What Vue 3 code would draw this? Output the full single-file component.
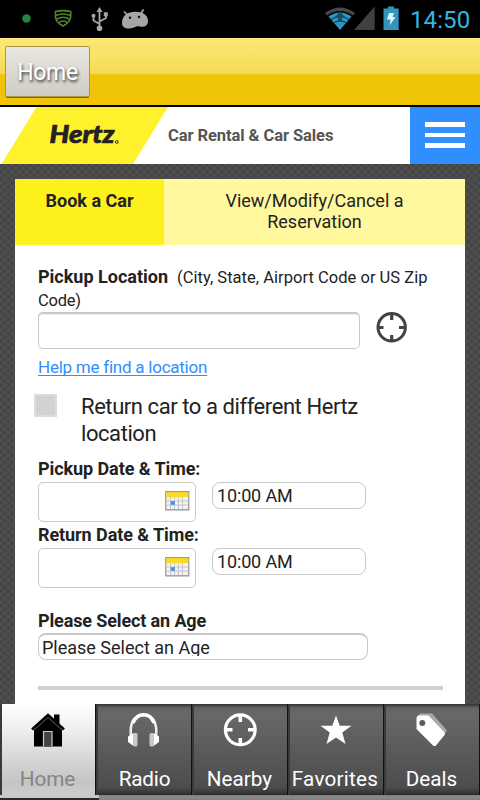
<script setup>
const dates = [
  { label: 'Pickup Date & Time:', time: '10:00 AM' },
  { label: 'Return Date & Time:', time: '10:00 AM' },
]
const days = [5.5, 9.5, 13.5, 17.5]
</script>

<template>
  <div class="screen">
    <div class="status">
      <svg class="status-left" width="160" height="38" viewBox="0 0 160 38">
        <circle cx="26.5" cy="18.5" r="4.3" fill="#238540" />
        <g fill="none" stroke="#4d8a2b" stroke-width="1.6">
          <path d="M55.500 12.500V11.600Q63 9.600 70.700 11.600V17Q70 22.500 63 26Q56 22.500 55.500 17Z" />
          <path d="M56 15.500Q63 12.500 70 15.500M57 19Q63 15.500 69.500 19M59 22.500Q63 19.500 67 22.500" />
        </g>
        <g fill="none" stroke="#a6a6a6" stroke-width="1.8">
          <path d="M99.500 10V27M99.500 24L93.500 20.500V16M99.500 21.500L106 18V15" />
        </g>
        <path d="M96.500 12L99.500 7L102.500 12Z" fill="#a6a6a6" />
        <circle cx="99.500" cy="28.300" r="2.800" fill="#a6a6a6" />
        <circle cx="93.500" cy="15.800" r="2" fill="#a6a6a6" />
        <rect x="103.800" y="12.300" width="4" height="4" fill="#a6a6a6" />
        <path d="M124 11.500L127.500 15M143.500 9.500L140.500 14" stroke="#a6a6a6" stroke-width="1.700" />
        <path d="M122 23C122 15 128 11.700 135 11.700C143 11.700 148 15 148 21C148 26 144 27.500 140 26.500C137 26 136.500 26.500 134 27.500C129 29.500 122 29 122 23Z" fill="#a6a6a6" />
        <circle cx="130" cy="17.700" r="1.200" fill="#111" />
        <circle cx="139" cy="17" r="1.200" fill="#111" />
      </svg>
      <svg class="status-right" width="80" height="38" viewBox="320 0 80 38">
        <path d="M325 13Q340 2 355 13L353 15.500Q340 6.500 327 15.500Z" fill="#484848" />
        <path d="M328.500 16.500Q340 8.500 351.500 16.500L340 30Z" fill="#2b96c0" />
        <path d="M331 19.500Q340 13.500 349 19.500M334 23Q340 18.500 346 23" fill="none" stroke="#154b60" stroke-width="1.300" />
        <path d="M340 11L344.500 17H342V22H338V17H335.500Z" fill="#174e64" />
        <path d="M374.700 6.500V30H354Z" fill="#404040" />
        <path d="M383.500 8.500H388V6.500H394V8.500H398.700V30H383.500Z" fill="#3395bc" />
        <path d="M389 13H394L392.500 17H395.500L389.500 25.500L390.700 19.500H387Z" fill="#dff5ff" />
      </svg>
      <span class="clock">14:50</span>
    </div>

    <div class="titlebar"><button class="home-btn">Home</button></div>

    <header class="brand">
      <svg class="logo" width="168" height="57" viewBox="0 0 168 57">
        <path d="M36.500 0H168L133 57H1.500Z" fill="#fff12b" />
        <text class="wordmark" x="49.500" y="36.300" textLength="65" lengthAdjust="spacingAndGlyphs">Hertz</text>
        <circle cx="116.800" cy="35" r="1.400" fill="none" stroke="#333" stroke-width="1" />
      </svg>
      <span class="tagline">Car Rental &amp; Car Sales</span>
      <div class="menu"><i></i><i></i><i></i></div>
    </header>

    <main class="body">
      <section class="card">
        <nav class="tabs">
          <div class="tab active">Book a Car</div>
          <div class="tab other">View/Modify/Cancel a<br />Reservation</div>
        </nav>
        <div class="form">
          <div class="label"><b>Pickup Location</b><span class="hint">(City, State, Airport Code or US Zip</span><br /><span class="hint2">Code)</span></div>
          <div class="location-row">
            <div class="field location"></div>
            <svg width="31" height="31" viewBox="0 0 31 31" fill="none" stroke="#444">
              <circle cx="15.700" cy="15.300" r="13.700" stroke-width="3" />
              <path d="M15.700 1V8M15.700 23V30M1 15.500H7.500M23 15.500H30" stroke-width="3.200" />
            </svg>
          </div>
          <a class="help">Help me find a location</a>
          <div class="check-row">
            <div class="checkbox"></div>
            <div>Return car to a different Hertz<br />location</div>
          </div>
          <div v-for="d in dates" :key="d.label" class="date-block">
            <b class="date-label">{{ d.label }}</b>
            <div class="date-row">
              <div class="field date">
                <svg width="25" height="21" viewBox="0 0 25 21">
                  <rect x="1" y="18" width="24" height="2" fill="#e6e6e6" />
                  <rect x=".7" y=".7" width="23" height="18" fill="#f3f3f3" stroke="#a3a3a8" stroke-width="1.400" />
                  <rect x="1.300" y="1" width="22" height="5.300" fill="#fad928" />
                  <path d="M1 .6H24" stroke="#b99d3a" stroke-width="1" />
                  <path v-for="x in days" :key="x" :d="`M${x} 6.500V18`" stroke="#c4c4c8" />
                  <path d="M1.500 10H23M1.500 14H23" stroke="#c4c4c8" />
                  <rect x="5.800" y="10.200" width="4" height="3.600" fill="#3e92e3" />
                </svg>
              </div>
              <div class="select time"><span>{{ d.time }}</span></div>
            </div>
          </div>
          <b class="age-label">Please Select an Age</b>
          <div class="select age"><span>Please Select an Age</span></div>
          <div class="rule"></div>
        </div>
      </section>
    </main>

    <footer class="tabbar">
      <div class="item on">
        <svg width="34" height="34" viewBox="0 0 34 34">
          <path d="M3 15L17 3L31 15V33.500H3Z" fill="#000" />
          <path d="M23 1.500H28.500V12L23 7Z" fill="#000" />
          <path d="M1 16.500L17 2L33 16.500" fill="none" stroke="#000" stroke-width="2.600" />
          <path d="M3 17L17 4.500L31 17" fill="none" stroke="#777" stroke-width=".8" />
          <path d="M12.500 33.500V18.500H21V33.500" fill="#444" stroke="#ccc" stroke-width="1.200" />
        </svg>
        <span>Home</span>
      </div>
      <div class="item radio">
        <svg width="34" height="34" viewBox="0 0 34 34">
          <path d="M4 23C2.500 11 6.500 2 16.500 2S30.500 11 29 23" fill="none" stroke="#eee" stroke-width="2.600" />
          <path d="M6 10C9 3 13 1.800 16.500 1.800S24.500 3 27 10" fill="none" stroke="#fff" stroke-width="3.400" />
          <path d="M6.500 20L1 23.500V29L6.500 33ZM26.500 20L32 23.500V29L26.500 33Z" fill="#fff" />
          <rect x="6" y="20" width="4.500" height="13.500" rx="1.500" fill="#c9c9c9" />
          <rect x="22.500" y="20" width="4.500" height="13.500" rx="1.500" fill="#c9c9c9" />
        </svg>
        <span>Radio</span>
      </div>
      <div class="item">
        <svg width="34" height="34" viewBox="0 0 34 34" fill="none" stroke="#fff">
          <circle cx="17.300" cy="16.800" r="14.900" stroke-width="3.200" />
          <path d="M17.300 1V9M17.300 25V33M1.500 16.800H9.500M25 16.800H33" stroke-width="3.600" />
        </svg>
        <span>Nearby</span>
      </div>
      <div class="item favorites">
        <svg width="34" height="34" viewBox="0 0 34 34">
          <path d="M17 2.500L20.700 12.700H32.500L23.300 19.600L26.500 31L17 24.500L7.500 31L10.700 19.600L1.500 12.700H13.300Z" fill="#fff" />
        </svg>
        <span>Favorites</span>
      </div>
      <div class="item">
        <svg width="34" height="34" viewBox="0 0 34 34">
          <path d="M3 3L5 .6H17L32 17.500L28.500 22L14 4Z" fill="#aaa" />
          <path d="M3 2.500H13.500L29.500 19.500Q30.500 21 29.500 22L21 32.500Q19.500 33.700 18 32.500L1.500 16V4.500Z" fill="#fff" />
          <circle cx="7.300" cy="10" r="3" fill="#5d5d5d" />
        </svg>
        <span>Deals</span>
      </div>
    </footer>
    <div class="bottom"><i></i></div>
  </div>
</template>

<style>
body { margin: 0; }
</style>

<style scoped>
* { box-sizing: border-box; }
.screen { width: 480px; height: 800px; overflow: hidden; display: flex; flex-direction: column; background: #000; font-family: Roboto, sans-serif; color: #222; font-size: 18px; white-space: nowrap; }
.status { height: 38px; display: flex; align-items: center; flex: none; }
.status-right { margin-left: 160px; }
.clock { margin-left: 10px; font-size: 24px; line-height: 38px; color: #33b5e5; padding-top: 1px; letter-spacing: .1px; }
.titlebar { height: 67px; flex: none; padding: 9px 6px; background: linear-gradient(#fce878 0, #f6dc53 35px, #efc407 37px, #efc407 100%); }
.home-btn { display: block; width: 83px; height: 49px; padding: 2px 0 0; border: 0; border-radius: 1px; background: linear-gradient(#e8e7e0, #cfccc4); box-shadow: 0 0 0 1px #a89847, 0 2px 0 #7e6913; color: #fff; font: 23px Roboto, sans-serif; letter-spacing: -.3px; text-shadow: 1px 2px 3px #333; }
.brand { height: 57px; margin-top: 2px; flex: none; background: #fff; display: flex; }
.wordmark { font: italic 900 24px Lato, sans-serif; fill: #222; stroke: #222; stroke-width: .7px; }
.tagline { color: #555; font-weight: 700; font-size: 16.500px; letter-spacing: -.07px; line-height: 57px; width: 242px; }
.menu { width: 70px; background: #308eff; display: flex; flex-direction: column; gap: 6px; padding: 15px 15px 0; }
.menu i { height: 4.500px; background: #fff; flex: none; }
.body { height: 540px; flex: none; padding: 15px 15px 0; background-color: #424242; background-image: repeating-linear-gradient(45deg, #60606055 0, transparent 2px, transparent 3.200px, #60606055 5.200px), repeating-linear-gradient(-45deg, #60606055 0, transparent 2px, transparent 3.200px, #60606055 5.200px); }
.card { height: 525px; background: #fff; }
.tabs { display: flex; height: 66px; }
.tab { text-align: center; line-height: 21px; padding-top: 11px; }
.active { width: 149px; background: #fdf01b; font-weight: 700; }
.other { flex: 1; background: #fff89f; }
.form { padding: 20px 22px 0 23px; display: flex; flex-direction: column; }
.label { height: 46px; line-height: 23px; }
.hint, .hint2 { font-size: 16.500px; }
.hint { margin-left: 9px; letter-spacing: .03px; }
.hint2 { position: relative; top: -1px; letter-spacing: -.25px; }
.location-row { display: flex; gap: 16px; margin-top: 1px; height: 37px; }
.field { border: 1.500px solid #c8c8c8; border-radius: 5px; background: #fff; }
.location { width: 322px; height: 37px; border-top-width: 2px; box-shadow: inset 0 1px 1px #eee; }
.help { margin-top: 6px; height: 24px; line-height: 24px; font-size: 17px; letter-spacing: -.24px; color: #308eff; text-decoration: underline; text-underline-offset: 2px; text-decoration-skip-ink: none; align-self: flex-start; }
.check-row { display: flex; margin: 14px 0 10px -4px; height: 54px; line-height: 27px; font-size: 22px; letter-spacing: -.43px; }
.checkbox { width: 23px; height: 23px; margin: 1px 24px 0 0; background: #d2d2d2; border: 2px solid #dcdcdc; }
.date-block { height: 66px; }
.date-label { display: block; height: 25px; line-height: 23px; letter-spacing: -.08px; }
.date-row { display: flex; gap: 16px; align-items: flex-start; }
.date { width: 158px; height: 40px; padding: 8px 0 0 126px; }
.select { border: 1.500px solid #c8c8c8; border-radius: 8px; }
.select span { display: block; }
.time { width: 154px; height: 27px; padding-left: 4px; line-height: 25px; letter-spacing: -.15px; }
.age-label { margin-top: 20px; height: 24px; line-height: 23px; letter-spacing: -.13px; }
.age { width: 330px; height: 27px; padding-left: 3px; line-height: 26px; border-top-width: 2px; }
.age span { height: 21px; overflow: hidden; }
.rule { margin-top: 26px; height: 4px; background: #cfcfcf; }
.tabbar { height: 91px; flex: none; display: grid; grid-template-columns: repeat(5, 96px); background: #444; }
.item { display: flex; flex-direction: column; align-items: center; padding: 9px 0 0 0; color: #fff; font-size: 20.700px; border-left: 2px solid #3a3a3a; border-right: 1px solid #111; background: linear-gradient(#333 0, #646464 4px, #686868 10px, #4c4c4c 84px, #2c2c2c 100%); }
.item svg, .item span { margin-left: -2px; }
.item span { margin-top: 18px; line-height: 28px; }
.radio span { margin-left: 0; letter-spacing: -.2px; }
.favorites span { margin-left: -3px; letter-spacing: .25px; }
.on { color: #858585; background: linear-gradient(#fff, #f0f0f0 25%, #c5c5c5 85%, #ccc); }
.bottom { height: 5px; background: linear-gradient(#777, #8c8c8c 30%, #808080); }
.bottom i { display: block; width: 99px; height: 5px; background: linear-gradient(#c8c8c8 0 3px, #292930 3px); }
</style>
